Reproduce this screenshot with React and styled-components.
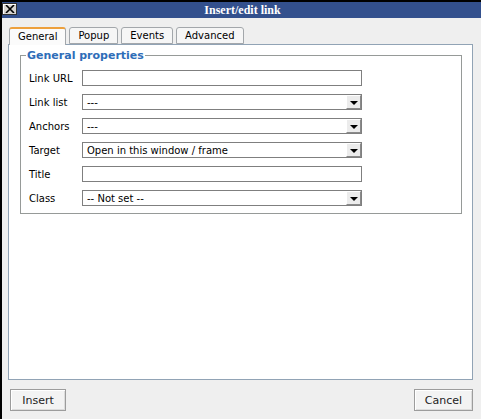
import styled, { createGlobalStyle } from "styled-components";

const GlobalStyle = createGlobalStyle`
  html, body {
    margin: 0;
    padding: 0;
    background: #efefef;
  }
  * {
    box-sizing: border-box;
  }
`;

const font = `"DejaVu Sans", Verdana, sans-serif`;

const rows = [
  { label: "Link URL", type: "input" },
  { label: "Link list", type: "select", value: "---" },
  { label: "Anchors", type: "select", value: "---" },
  { label: "Target", type: "select", value: "Open in this window / frame" },
  { label: "Title", type: "input" },
  { label: "Class", type: "select", value: "-- Not set --" },
];

const tabs = ["General", "Popup", "Events", "Advanced"];

function App() {
  return (
    <>
      <GlobalStyle />
      <Dialog>
        <TitleBar>
          <CloseButton type="button" aria-label="Close">
            <svg width="10" height="8" viewBox="0 0 10 8">
              <path d="M1 0 L9 8 M9 0 L1 8" stroke="#000" strokeWidth="1.6" />
            </svg>
          </CloseButton>
          <TitleText>Insert/edit link</TitleText>
        </TitleBar>

        <Body>
          <Tabs>
            {tabs.map((t, i) => (
              <Tab key={t} $active={i === 0}>
                {t}
              </Tab>
            ))}
          </Tabs>

          <Panel>
            <Fieldset>
              <Legend>General properties</Legend>
              <FormTable>
                <tbody>
                  {rows.map((r) => (
                    <tr key={r.label}>
                      <LabelCell>{r.label}</LabelCell>
                      <FieldCell>
                        {r.type === "input" ? (
                          <TextInput type="text" defaultValue="" />
                        ) : (
                          <Select>
                            <SelectText>{r.value}</SelectText>
                            <DropButton>
                              <Arrow />
                            </DropButton>
                          </Select>
                        )}
                      </FieldCell>
                    </tr>
                  ))}
                </tbody>
              </FormTable>
            </Fieldset>
          </Panel>

          <Footer>
            <Button type="button" $w={56}>
              Insert
            </Button>
            <Button type="button" $w={59}>
              Cancel
            </Button>
          </Footer>
        </Body>
      </Dialog>
    </>
  );
}

const Dialog = styled.div`
  width: 481px;
  height: 419px;
  display: flex;
  flex-direction: column;
  border-top: 2px solid #000;
  border-left: 2px solid #000;
  background: #efefef;
  font-family: ${font};
  font-size: 10px;
  color: #000;
`;

const TitleBar = styled.div`
  position: relative;
  height: 16px;
  flex: none;
  display: flex;
  align-items: center;
  justify-content: center;
  background: #33508d;
`;

const CloseButton = styled.button`
  position: absolute;
  left: 0;
  top: 1px;
  width: 15px;
  height: 12px;
  padding: 0;
  display: flex;
  align-items: center;
  justify-content: center;
  background: #d8d5d0;
  border: 1px solid #303030;
  box-shadow: inset 1px 1px 0 #fff;
`;

const TitleText = styled.span`
  font-family: "Liberation Serif", "Times New Roman", serif;
  font-weight: bold;
  font-size: 12px;
  color: #fff;
  margin-left: 2px;
  margin-top: 1px;
`;

const Body = styled.div`
  flex: 1;
  display: flex;
  flex-direction: column;
  padding: 9px 8px 8px 6px;
`;

const Tabs = styled.div`
  display: flex;
  gap: 3px;
  padding-left: 1px;
  height: 17px;
  flex: none;
  position: relative;
  z-index: 1;
`;

const Tab = styled.div`
  height: ${(p) => (p.$active ? "18px" : "17px")};
  padding: 0 8px;
  display: flex;
  align-items: center;
  border: 1px solid #a3a7ab;
  border-bottom: ${(p) => (p.$active ? "none" : "1px solid #a3a7ab")};
  border-top: ${(p) => (p.$active ? "2px solid #eda03d" : "1px solid #a3a7ab")};
  border-radius: 3px 3px 0 0;
  background: ${(p) => (p.$active ? "#fbfbfb" : "#f6f6f6")};
  color: #000;
  font-family: ${font};
  font-size: 10px;
  line-height: 1;
  padding-top: ${(p) => (p.$active ? "0" : "1px")};
`;

const Panel = styled.div`
  flex: 1;
  background: #fff;
  border: 1px solid #91a3b5;
  padding: 4px 10px 0 11px;
`;

const Fieldset = styled.fieldset`
  margin: 0;
  padding: 1px 5px 3px 5px;
  border: 1px solid #969a98;
`;

const Legend = styled.legend`
  padding: 0 1px;
  font-family: ${font};
  font-weight: bold;
  font-size: 11px;
  line-height: 13px;
  color: #2e6db8;
`;

const FormTable = styled.table`
  border-collapse: collapse;
  margin-top: 3px;
  font-family: ${font};
  font-size: 10px;
`;

const LabelCell = styled.td`
  width: 53px;
  padding: 4px 3px;
  white-space: nowrap;
  vertical-align: middle;
  font-family: ${font};
  font-size: 10px;
  color: #000;
`;

const FieldCell = styled.td`
  padding: 4px 3px;
  vertical-align: middle;
  font-family: ${font};
  font-size: 10px;
`;

const TextInput = styled.input`
  display: block;
  width: 280px;
  height: 16px;
  margin: 0;
  padding: 0 4px;
  border: 1px solid #7f7f7f;
  background: #fff;
  font-family: ${font};
  font-size: 10px;
  outline: none;
`;

const Select = styled.div`
  width: 280px;
  height: 16px;
  display: flex;
  align-items: stretch;
  border: 1px solid #7f7f7f;
  background: #fff;
`;

const SelectText = styled.span`
  flex: 1;
  display: flex;
  align-items: center;
  padding-left: 4px;
  font-family: ${font};
  font-size: 10px;
  white-space: nowrap;
`;

const DropButton = styled.span`
  width: 15px;
  display: flex;
  align-items: center;
  justify-content: center;
  background: #ececec;
  border-left: 1px solid #fff;
  border-top: 1px solid #fff;
  border-right: 1px solid #8a8a8a;
  border-bottom: 1px solid #8a8a8a;
`;

const Arrow = styled.span`
  width: 0;
  height: 0;
  border-left: 4px solid transparent;
  border-right: 4px solid transparent;
  border-top: 4px solid #000;
  margin-top: 1px;
`;

const Footer = styled.div`
  flex: none;
  display: flex;
  justify-content: space-between;
  padding: 9px 0 0 2px;
`;

const Button = styled.button`
  width: ${(p) => p.$w}px;
  height: 22px;
  padding: 0;
  border: 1px solid #9c9c9c;
  box-shadow: inset 1px 1px 0 #fff, inset -1px -1px 0 #dcdcdc;
  background: #f3f3f3;
  font-family: ${font};
  font-size: 11px;
  color: #222;
  cursor: pointer;
`;

export default App;
